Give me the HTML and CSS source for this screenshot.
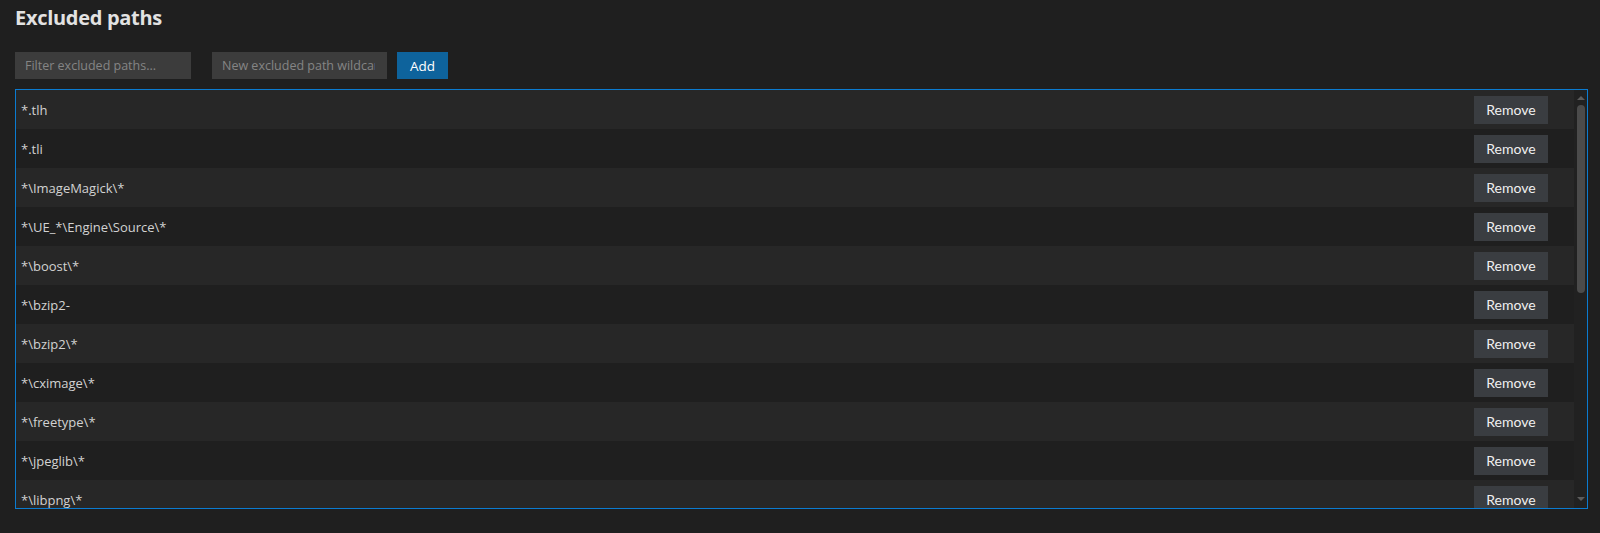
FILE: index.html
```html
<!DOCTYPE html>
<html lang="en">
<head>
<meta charset="utf-8">
<title>Excluded paths</title>
<link rel="stylesheet" href="styles.css">
</head>
<body>
<div class="page">
  <h1 class="title">Excluded paths</h1>
  <div class="toolbar">
    <input class="field field-filter" type="text" placeholder="Filter excluded paths...">
    <input class="field field-new" type="text" placeholder="New excluded path wildcard">
    <button class="btn-add" type="button">Add</button>
  </div>
  <div class="list">
    <div class="rows">
      <div class="row"><span class="path">*.tlh</span><button class="btn-remove" type="button">Remove</button></div>
      <div class="row"><span class="path">*.tli</span><button class="btn-remove" type="button">Remove</button></div>
      <div class="row"><span class="path">*\ImageMagick\*</span><button class="btn-remove" type="button">Remove</button></div>
      <div class="row"><span class="path">*\UE_*\Engine\Source\*</span><button class="btn-remove" type="button">Remove</button></div>
      <div class="row"><span class="path">*\boost\*</span><button class="btn-remove" type="button">Remove</button></div>
      <div class="row"><span class="path">*\bzip2-</span><button class="btn-remove" type="button">Remove</button></div>
      <div class="row"><span class="path">*\bzip2\*</span><button class="btn-remove" type="button">Remove</button></div>
      <div class="row"><span class="path">*\cximage\*</span><button class="btn-remove" type="button">Remove</button></div>
      <div class="row"><span class="path">*\freetype\*</span><button class="btn-remove" type="button">Remove</button></div>
      <div class="row"><span class="path">*\jpeglib\*</span><button class="btn-remove" type="button">Remove</button></div>
      <div class="row"><span class="path">*\libpng\*</span><button class="btn-remove" type="button">Remove</button></div>
    </div>
    <div class="scrollbar">
      <div class="arrow-up"></div>
      <div class="thumb"></div>
      <div class="arrow-down"></div>
    </div>
  </div>
</div>
</body>
</html>
```
FILE: styles.css
```css
* { box-sizing: border-box; }

html, body {
  margin: 0;
  background: #1f1f1f;
  height: 533px;
  overflow: hidden;
}

body {
  font-family: "Open Sans", "Noto Sans", "Liberation Sans", sans-serif;
  color: #cccccc;
}

.page {
  padding: 8px 12px 0 15px;
}

.title {
  margin: 0;
  font-size: 20px;
  line-height: 20px;
  font-weight: 700;
  color: #e2e2e2;
  letter-spacing: -0.3px;
}

.toolbar {
  display: flex;
  align-items: stretch;
  height: 27px;
  margin-top: 24px;
}

.field {
  height: 27px;
  border: none;
  outline: none;
  background: #3c3c3c;
  color: #cccccc;
  padding: 0 10px;
  font-family: inherit;
  font-size: 12.5px;
}

.field::placeholder {
  color: #858585;
  opacity: 1;
}

.field-filter {
  width: 176px;
  margin-right: 21px;
}

.field-new {
  width: 175px;
  margin-right: 10px;
  padding-right: 12px;
}

.btn-add {
  width: 51px;
  height: 27px;
  border: none;
  background: #0e639c;
  color: #ffffff;
  font-family: inherit;
  font-size: 13.5px;
  padding: 0;
}

.list {
  display: flex;
  margin-top: 10px;
  height: 420px;
  border: 1px solid #0b7bd0;
}

.rows {
  flex: 1;
  overflow: hidden;
}

.row {
  display: flex;
  align-items: center;
  justify-content: space-between;
  height: 39px;
  padding: 0 26px 0 5px;
}

.row:nth-child(odd) {
  background: #272727;
}

.path {
  font-size: 13px;
  color: #d2d2d2;
}

.btn-remove {
  width: 74px;
  height: 28px;
  border: none;
  background: #3a3d41;
  color: #f0f0f0;
  font-family: "Lato", "Open Sans", sans-serif;
  font-size: 14px;
  padding: 0;
}

.scrollbar {
  width: 13px;
  display: flex;
  flex-direction: column;
  align-items: center;
  background: #212121;
}

.arrow-up {
  margin-top: 6px;
  width: 0;
  height: 0;
  border-left: 4px solid transparent;
  border-right: 4px solid transparent;
  border-bottom: 4px solid #5c5c5c;
}

.thumb {
  margin-top: 5px;
  width: 8px;
  height: 188px;
  border-radius: 4px;
  background: #4b4b4b;
}

.arrow-down {
  margin-top: auto;
  margin-bottom: 7px;
  width: 0;
  height: 0;
  border-left: 4px solid transparent;
  border-right: 4px solid transparent;
  border-top: 4px solid #5c5c5c;
}
```
